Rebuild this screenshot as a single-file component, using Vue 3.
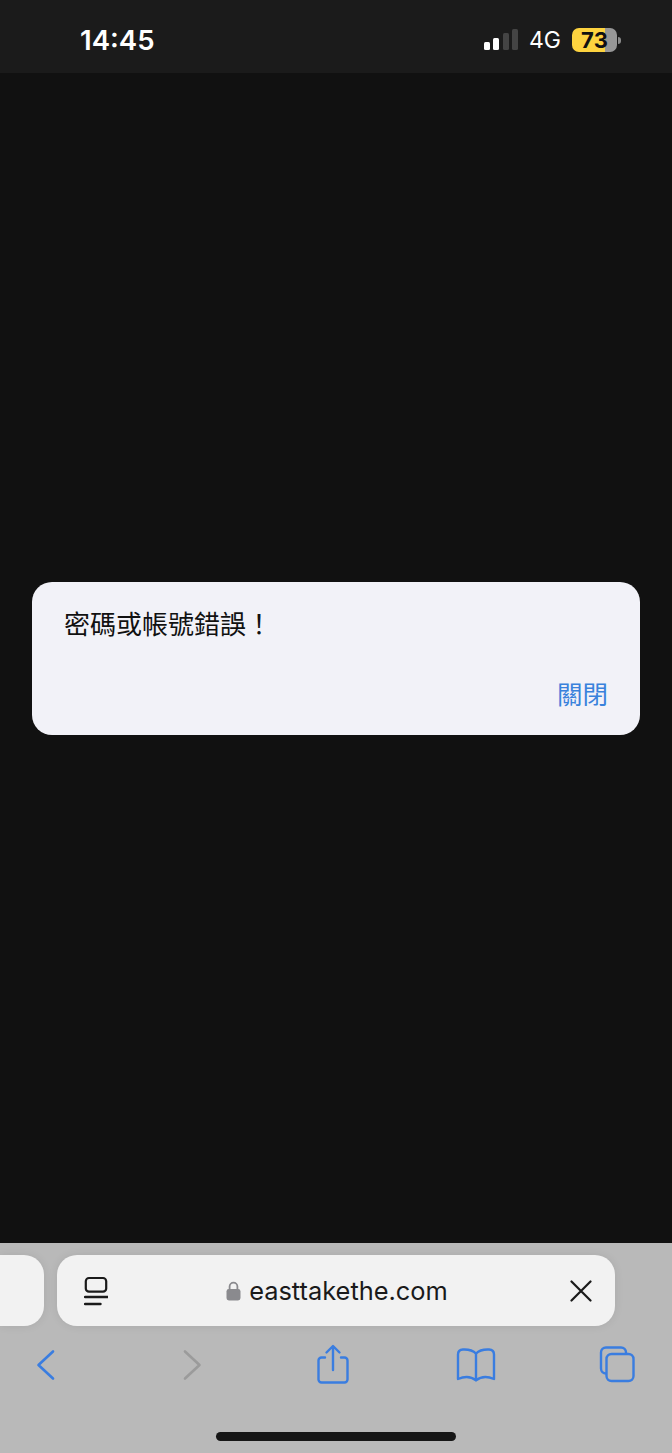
<script setup>
const title = '密碼或帳號錯誤！'
</script>

<template>
  <div class="screen">
    <header class="status">
      <span class="time">14:45</span>
      <div class="status-right">
        <div class="signal">
          <i class="bar b1"></i><i class="bar b2"></i><i class="bar b3"></i><i class="bar b4"></i>
        </div>
        <span class="net">4G</span>
        <div class="battery">
          <div class="battery-body"><span class="battery-level">73</span></div>
          <i class="battery-nub"></i>
        </div>
      </div>
    </header>

    <main class="page">
      <section class="dialog">
        <p class="message">{{ title }}</p>
        <div class="actions"><button class="close-btn">關閉</button></div>
      </section>
    </main>

    <footer class="browser">
      <div class="tabs">
        <div class="tab-prev"></div>
        <div class="address">
          <svg class="reader" width="24" height="30" viewBox="0 0 24 30" fill="none" stroke="#1a1a1a" stroke-linecap="round">
            <rect x="1.8" y="2" width="20.4" height="13.6" rx="3.2" stroke-width="2.2"/>
            <path d="M1 21h22.5" stroke-width="2.4"/>
            <path d="M1 28h15.5" stroke-width="2.4"/>
          </svg>
          <div class="url">
            <svg width="15" height="20" viewBox="0 0 15 20" fill="none">
              <path d="M3.6 9V5.6a3.9 3.9 0 0 1 7.8 0V9" stroke="#8a8a8e" stroke-width="1.8"/>
              <rect x="0.5" y="8" width="14" height="11.5" rx="2.4" fill="#8a8a8e"/>
            </svg>
            <span class="domain">easttakethe.com</span>
          </div>
          <svg class="clear" width="22" height="22" viewBox="0 0 22 22" fill="none" stroke="#1a1a1a" stroke-width="2.2" stroke-linecap="round">
            <path d="M1.5 1.5l19 19M20.5 1.5l-19 19"/>
          </svg>
        </div>
      </div>

      <nav class="toolbar">
        <svg class="tool" width="44" height="44" viewBox="0 0 44 44" fill="none" stroke="#3a7de0" stroke-width="2.6" stroke-linecap="round" stroke-linejoin="round">
          <path d="M30 8.5L15.5 22 30 35.5"/>
        </svg>
        <svg class="tool" width="44" height="44" viewBox="0 0 44 44" fill="none" stroke="#9b9b9b" stroke-width="2.6" stroke-linecap="round" stroke-linejoin="round">
          <path d="M15 8.5L29.5 22 15 35.5"/>
        </svg>
        <svg class="tool" width="44" height="44" viewBox="0 0 44 44" fill="none" stroke="#3a7de0" stroke-width="2.4" stroke-linecap="round" stroke-linejoin="round">
          <path d="M14 14.5h-3.5a3 3 0 0 0-3 3v19a3 3 0 0 0 3 3h23a3 3 0 0 0 3-3v-19a3 3 0 0 0-3-3H30"/>
          <path d="M22 27V3.5M15.5 9.5L22 3l6.5 6.5"/>
        </svg>
        <svg class="tool" width="44" height="44" viewBox="0 0 44 44" fill="none" stroke="#3a7de0" stroke-width="2.4" stroke-linecap="round" stroke-linejoin="round">
          <path d="M22 10.5C19 7.5 15 6.2 9 6.5 5.5 6.7 4 8.5 4 11.5v24.5c6-2.600 13-2.600 18 1.400 5-4 12-4 18-1.400V11.5c0-3-1.500-4.800-5-5-6-.3-10 1-13 4z"/>
          <path d="M22 10.5v26.5"/>
        </svg>
        <svg class="tool" width="44" height="44" viewBox="0 0 44 44" fill="none" stroke="#3a7de0" stroke-width="2.4" stroke-linejoin="round">
          <path d="M11 30.500h-1a5 5 0 0 1-5-5v-16a5 5 0 0 1 5-5h15a5 5 0 0 1 5 5v1"/>
          <rect x="10.5" y="11" width="27" height="27" rx="5"/>
        </svg>
      </nav>

      <div class="home-indicator"></div>
    </footer>
  </div>
</template>

<style>
html, body { margin: 0; background: #111; }
</style>

<style scoped>
.screen {
  width: 672px;
  height: 1453px;
  display: flex;
  flex-direction: column;
  overflow: hidden;
  font-family: Inter, "Noto Sans CJK TC", sans-serif;
}
.status {
  height: 73px;
  flex: none;
  box-sizing: border-box;
  background: #1b1b1b;
  display: flex;
  justify-content: space-between;
  align-items: center;
  padding: 7px 51px 0 80px;
  color: #fff;
}
.time { font-size: 27.6px; font-weight: 600; }
.status-right { display: flex; align-items: center; }
.signal { display: flex; align-items: flex-end; gap: 3.3px; height: 22px; margin-top: -2px; }
.bar { width: 6px; border-radius: 1.5px; background: #fff; display: block; }
.b1 { height: 8px; }
.b2 { height: 12px; }
.b3 { height: 17px; background: #444; }
.b4 { height: 21px; background: #444; }
.net { font-size: 23px; font-weight: 400; margin-left: 11px; width: 32px; }
.battery { display: flex; align-items: center; margin-left: 11px; }
.battery-body {
  width: 45px;
  height: 24px;
  border-radius: 7px;
  overflow: hidden;
  box-sizing: border-box;
  background: linear-gradient(90deg, #fdd33f 0 33px, #979797 33px);
  color: #111;
  font-size: 22px;
  font-weight: 700;
  line-height: 24px;
  padding-left: 9px;
}
.battery-level { letter-spacing: 0.3px; }
.battery-nub { width: 3px; height: 7px; margin-left: 1px; border-radius: 0 3px 3px 0; background: #8b8b8b; display: block; }

.page {
  flex: 1;
  background: #111;
  display: flex;
  align-items: center;
  justify-content: center;
}
.dialog {
  width: 608px;
  height: 153px;
  box-sizing: border-box;
  background: #f2f2f8;
  border-radius: 20px;
  padding: 24px 32px;
}
.message {
  margin: 0;
  font-family: "Noto Sans CJK TC", sans-serif;
  font-size: 26px;
  line-height: 34px;
  color: #111;
}
.actions { display: flex; justify-content: flex-end; margin-top: 36px; }
.close-btn {
  border: 0;
  padding: 0;
  background: none;
  font-family: "Noto Sans CJK TC", sans-serif;
  font-size: 25.5px;
  line-height: 34px;
  color: #3a82dc;
}

.browser {
  height: 210px;
  flex: none;
  background: #b9b9b9;
  display: flex;
  flex-direction: column;
}
.tabs { display: flex; gap: 13px; margin-top: 12px; height: 71px; }
.tab-prev {
  width: 44px;
  flex: none;
  background: #f2f2f2;
  border-radius: 0 20px 20px 0;
  box-shadow: 0 0 10px rgba(0, 0, 0, .08);
}
.address {
  width: 558px;
  flex: none;
  box-sizing: border-box;
  background: #f2f2f2;
  border-radius: 20px;
  box-shadow: 0 0 10px rgba(0, 0, 0, .08);
  display: flex;
  align-items: center;
  padding: 0 23px 0 27px;
}
.url { flex: 1; display: flex; align-items: center; justify-content: center; gap: 8px; margin-right: 4px; }
.domain { font-size: 25.4px; color: #1a1a1a; }
.toolbar {
  display: grid;
  grid-template-columns: 147px 141px 143px 142px 44px;
  justify-items: start;
  padding-left: 23px;
  margin-top: 17px;
}
.tool { display: block; }
.home-indicator {
  width: 240px;
  height: 9px;
  border-radius: 5px;
  background: #161616;
  margin: auto auto 12px;
}
</style>
